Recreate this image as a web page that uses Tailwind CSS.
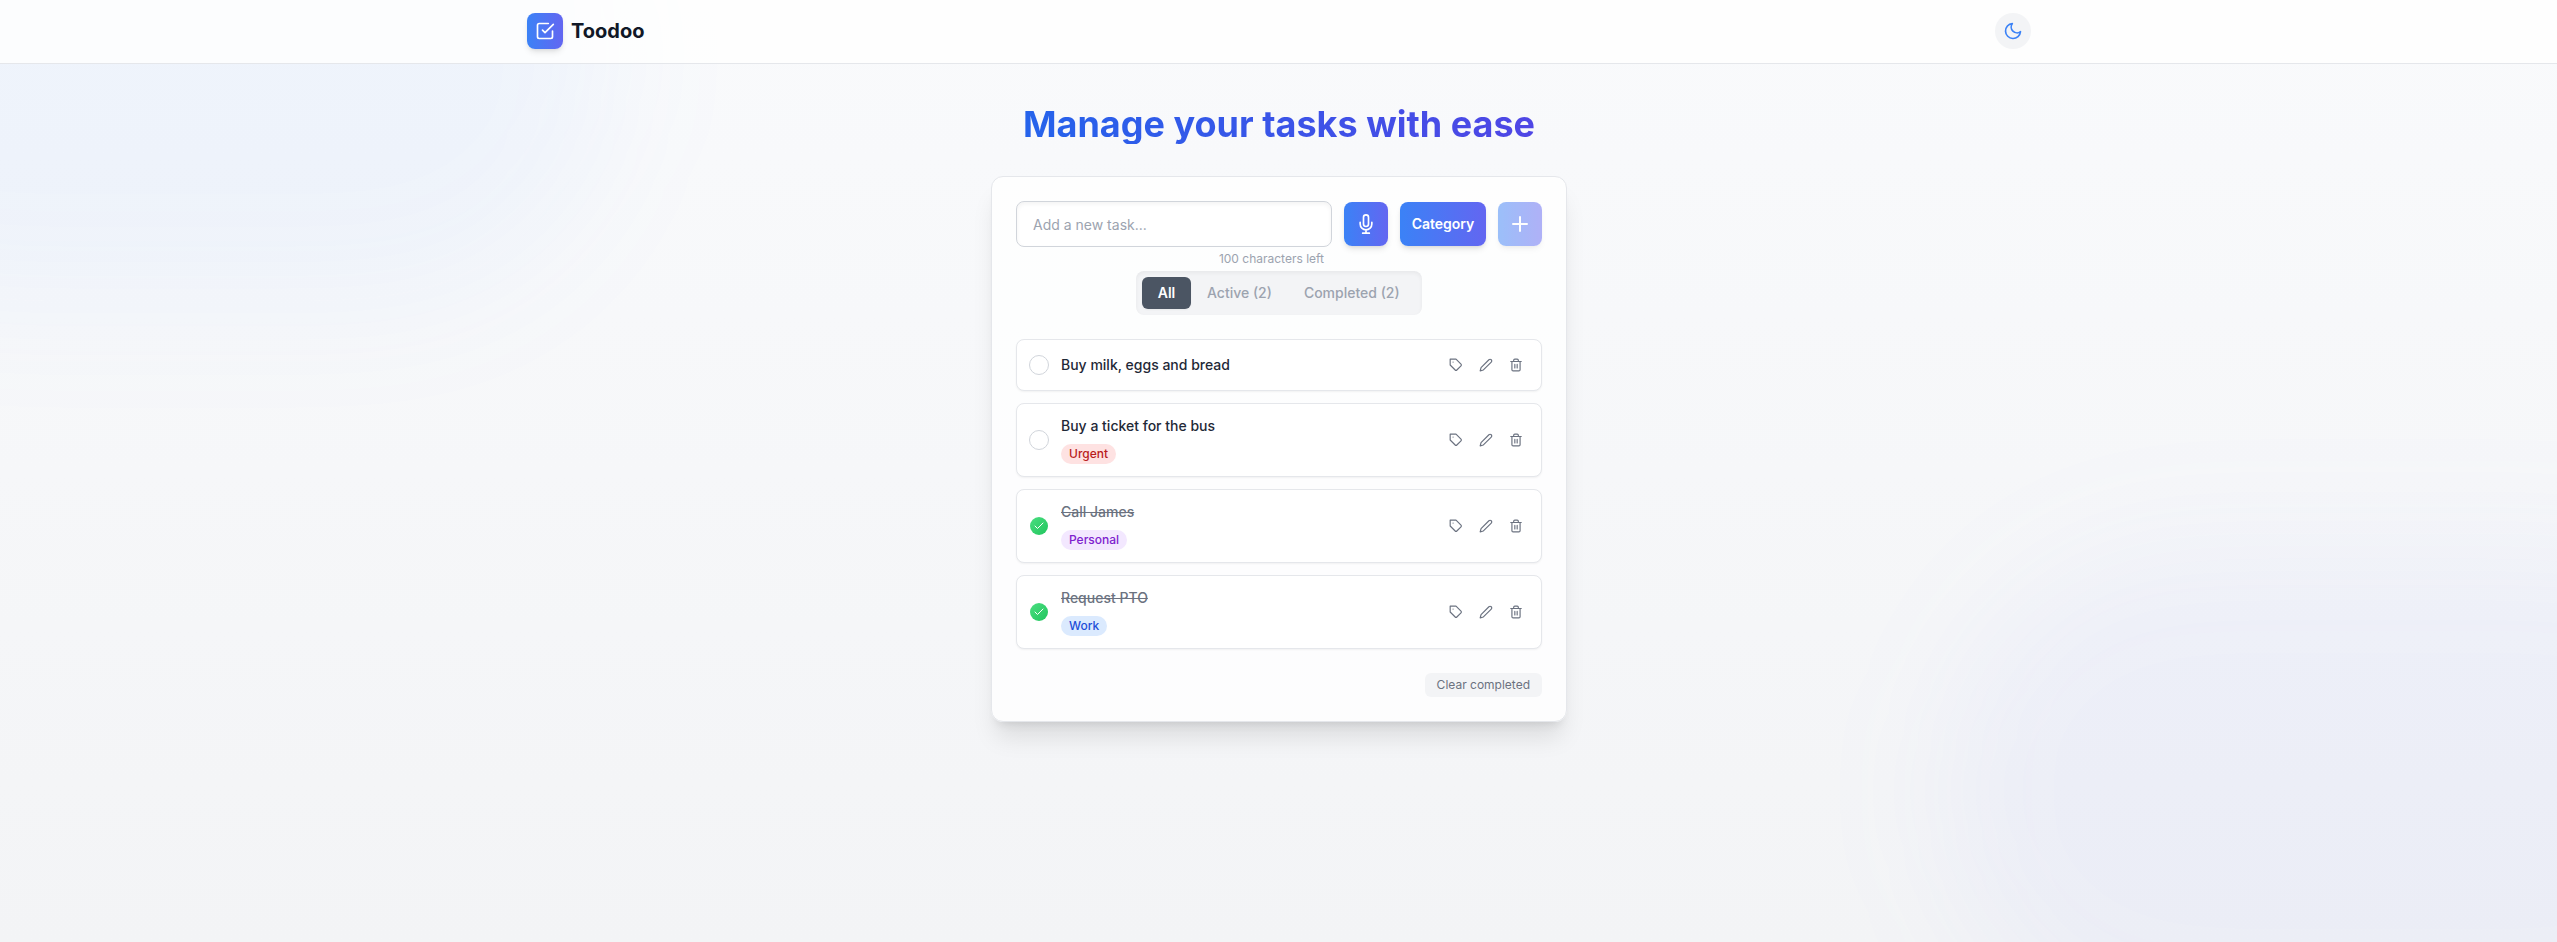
<!DOCTYPE html>
<html lang="en">
<head>
<meta charset="utf-8">
<title>Toodoo</title>
<script src="https://cdn.jsdelivr.net/npm/@tailwindcss/browser@4"></script>
</head>
<body class="relative h-screen overflow-hidden bg-linear-to-b/srgb from-[#f9fafc] to-[#f3f4f6] font-['Inter',sans-serif] text-[#1f2937] antialiased">
<!-- icon sprite -->
<svg class="hidden" xmlns="http://www.w3.org/2000/svg">
  <symbol id="tag" viewBox="0 0 24 24"><path d="M20.59 13.41l-7.17 7.17a2 2 0 0 1-2.83 0L2 12V2h10l8.59 8.59a2 2 0 0 1 0 2.82z"/><path d="M7 7h.01"/></symbol>
  <symbol id="edit" viewBox="0 0 24 24"><path d="M17 3a2.828 2.828 0 1 1 4 4L7.5 20.5 2 22l1.5-5.5L17 3z"/></symbol>
  <symbol id="trash" viewBox="0 0 24 24"><path d="M3 6h18M19 6v14a2 2 0 0 1-2 2H7a2 2 0 0 1-2-2V6m3 0V4a2 2 0 0 1 2-2h4a2 2 0 0 1 2 2v2M10 11v6M14 11v6"/></symbol>
  <symbol id="check" viewBox="0 0 24 24"><path d="M20 6L9 17l-5-5"/></symbol>
</svg>

<!-- soft background glows -->
<div class="absolute inset-0 overflow-hidden">
  <div class="absolute -left-[10%] -top-[20%] h-[52%] w-[34%] rounded-full bg-[#3b82f6]/5 blur-3xl"></div>
  <div class="absolute -bottom-[10%] -right-[10%] h-[52%] w-[34%] rounded-full bg-[#6078ff]/5 blur-3xl"></div>
</div>

<header class="relative h-16 border-b border-[#e5e7eb] bg-white/80 pl-px">
  <div class="mx-auto flex h-[62px] max-w-screen-2xl items-center justify-between px-4">
    <div class="flex items-center gap-2">
      <div class="flex size-9 items-center justify-center rounded-lg bg-linear-to-r/srgb from-[#3b82f6] to-[#6366f1] text-white shadow-md">
        <svg class="size-5" viewBox="0 0 24 24" fill="none" stroke="currentColor" stroke-width="2" stroke-linecap="round" stroke-linejoin="round"><path d="M9 11l3 3L22 4"/><path d="M21 12v7a2 2 0 0 1-2 2H5a2 2 0 0 1-2-2V5a2 2 0 0 1 2-2h11"/></svg>
      </div>
      <span class="text-xl font-bold text-[#111827]">Toodoo</span>
    </div>
    <button class="flex size-9 items-center justify-center rounded-full bg-[#f3f4f6] text-[#3b82f6]">
      <svg class="size-5" viewBox="0 0 24 24" fill="none" stroke="currentColor" stroke-width="2" stroke-linecap="round" stroke-linejoin="round"><path d="M21 12.79A9 9 0 1 1 11.21 3 7 7 0 0 0 21 12.79z"/></svg>
    </button>
  </div>
</header>

<main class="relative pl-px pt-10">
  <h1 class="mx-auto mb-8 w-fit whitespace-nowrap bg-linear-to-r/srgb from-[#2563eb] to-[#4f46e5] bg-clip-text text-4xl font-bold text-transparent">Manage your tasks with ease</h1>

  <section class="mx-auto max-w-xl rounded-xl border border-[#e5e7eb] bg-white/80 p-6 shadow-xl">
    <form class="flex items-center gap-3">
      <input type="text" placeholder="Add a new task..." class="h-[46px] min-w-0 flex-1 rounded-lg border border-[#d1d5db] bg-white px-4 py-3 text-sm shadow-inner placeholder:text-[#9ca3af]">
      <button type="button" class="flex size-11 items-center justify-center rounded-lg bg-linear-to-r/srgb from-[#3b82f6] to-[#6366f1] text-white shadow-md">
        <svg class="size-5" viewBox="0 0 24 24" fill="none" stroke="currentColor" stroke-width="2" stroke-linecap="round" stroke-linejoin="round"><path d="M12 1a3 3 0 0 0-3 3v8a3 3 0 0 0 6 0V4a3 3 0 0 0-3-3z"/><path d="M19 10v2a7 7 0 0 1-14 0v-2M12 19v4M8 23h8"/></svg>
      </button>
      <button type="button" class="h-11 w-[86px] rounded-lg bg-linear-to-r/srgb from-[#3b82f6] to-[#6366f1] text-sm font-semibold text-white shadow-md">Category</button>
      <button type="button" class="flex size-11 items-center justify-center rounded-lg bg-linear-to-r/srgb from-[#3b82f6] to-[#6366f1] text-white opacity-50 shadow-md">
        <svg class="size-6" viewBox="0 0 24 24" fill="none" stroke="currentColor" stroke-width="2" stroke-linecap="round" stroke-linejoin="round"><path d="M12 5v14M5 12h14"/></svg>
      </button>
    </form>
    <p class="mb-1 mt-1 w-[316px] pr-2 text-right text-xs text-[#9ca3af]">100 characters left</p>

    <div class="mx-auto mb-6 flex w-[286px] rounded-lg bg-[#f3f4f6] p-1.5 text-sm font-medium text-[#9ca3af] shadow-inner">
      <button class="w-[49px] rounded-md bg-[#4b5563] py-1.5 font-semibold text-white shadow-xs">All</button>
      <button class="whitespace-nowrap px-4 py-1.5">Active (2)</button>
      <button class="whitespace-nowrap px-4 py-1.5">Completed (2)</button>
    </div>

    <ul class="flex flex-col gap-3">
      <li class="flex items-center gap-3 rounded-lg border border-[#e5e7eb] bg-white p-3 shadow-xs">
        <span class="size-5 rounded-full border border-[#d1d5db]"></span>
        <div class="flex-1 text-sm font-medium">Buy milk, eggs and bread</div>
        <div class="flex gap-1 fill-none stroke-[#6b7280] stroke-2 [stroke-linecap:round] [stroke-linejoin:round]">
          <button class="p-1.5"><svg class="size-3.5"><use href="#tag"/></svg></button>
          <button class="p-1.5"><svg class="size-3.5"><use href="#edit"/></svg></button>
          <button class="p-1.5"><svg class="size-3.5"><use href="#trash"/></svg></button>
        </div>
      </li>
      <li class="flex items-center gap-3 rounded-lg border border-[#e5e7eb] bg-white p-3 shadow-xs">
        <span class="size-5 rounded-full border border-[#d1d5db]"></span>
        <div class="flex flex-1 flex-col items-start gap-2 text-sm font-medium">
          <span>Buy a ticket for the bus</span>
          <span class="rounded-full bg-[#fee2e2] px-2 py-0.5 text-xs text-[#b91c1c]">Urgent</span>
        </div>
        <div class="flex gap-1 fill-none stroke-[#6b7280] stroke-2 [stroke-linecap:round] [stroke-linejoin:round]">
          <button class="p-1.5"><svg class="size-3.5"><use href="#tag"/></svg></button>
          <button class="p-1.5"><svg class="size-3.5"><use href="#edit"/></svg></button>
          <button class="p-1.5"><svg class="size-3.5"><use href="#trash"/></svg></button>
        </div>
      </li>
      <li class="flex items-center gap-3 rounded-lg border border-[#e5e7eb] bg-white p-3 shadow-xs">
        <span class="flex size-5 items-center justify-center rounded-full border border-transparent bg-linear-to-br/srgb from-[#4ade80] to-[#22c55e] bg-clip-padding text-white"><svg class="size-3 fill-none stroke-current stroke-2 [stroke-linecap:round] [stroke-linejoin:round]"><use href="#check"/></svg></span>
        <div class="flex flex-1 flex-col items-start gap-2 text-sm font-medium">
          <span class="text-[#6b7280] line-through">Call James</span>
          <span class="rounded-full bg-[#f3e8ff] px-2 py-0.5 text-xs text-[#7e22ce]">Personal</span>
        </div>
        <div class="flex gap-1 fill-none stroke-[#6b7280] stroke-2 [stroke-linecap:round] [stroke-linejoin:round]">
          <button class="p-1.5"><svg class="size-3.5"><use href="#tag"/></svg></button>
          <button class="p-1.5"><svg class="size-3.5"><use href="#edit"/></svg></button>
          <button class="p-1.5"><svg class="size-3.5"><use href="#trash"/></svg></button>
        </div>
      </li>
      <li class="flex items-center gap-3 rounded-lg border border-[#e5e7eb] bg-white p-3 shadow-xs">
        <span class="flex size-5 items-center justify-center rounded-full border border-transparent bg-linear-to-br/srgb from-[#4ade80] to-[#22c55e] bg-clip-padding text-white"><svg class="size-3 fill-none stroke-current stroke-2 [stroke-linecap:round] [stroke-linejoin:round]"><use href="#check"/></svg></span>
        <div class="flex flex-1 flex-col items-start gap-2 text-sm font-medium">
          <span class="text-[#6b7280] line-through">Request PTO</span>
          <span class="rounded-full bg-[#dbeafe] px-2 py-0.5 text-xs text-[#1d4ed8]">Work</span>
        </div>
        <div class="flex gap-1 fill-none stroke-[#6b7280] stroke-2 [stroke-linecap:round] [stroke-linejoin:round]">
          <button class="p-1.5"><svg class="size-3.5"><use href="#tag"/></svg></button>
          <button class="p-1.5"><svg class="size-3.5"><use href="#edit"/></svg></button>
          <button class="p-1.5"><svg class="size-3.5"><use href="#trash"/></svg></button>
        </div>
      </li>
    </ul>

    <div class="mt-6 flex justify-end">
      <button class="rounded-md bg-[#f3f4f6] px-3 py-1 text-xs text-[#6b7280]">Clear completed</button>
    </div>
  </section>
</main>
</body>
</html>
